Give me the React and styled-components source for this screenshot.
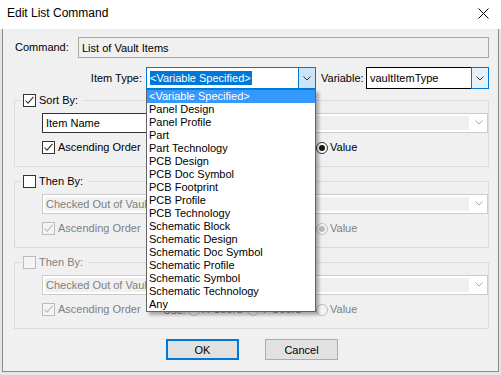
import styled, { createGlobalStyle } from "styled-components";

const ITEM_TYPES = [
  "<Variable Specified>",
  "Panel Design",
  "Panel Profile",
  "Part",
  "Part Technology",
  "PCB Design",
  "PCB Doc Symbol",
  "PCB Footprint",
  "PCB Profile",
  "PCB Technology",
  "Schematic Block",
  "Schematic Design",
  "Schematic Doc Symbol",
  "Schematic Profile",
  "Schematic Symbol",
  "Schematic Technology",
  "Any",
];

const GlobalStyle = createGlobalStyle`
  html, body {
    margin: 0;
    padding: 0;
    background: #e6e6e6;
  }
  body {
    font-family: "Liberation Sans", Arial, sans-serif;
    font-size: 11px;
    color: #000;
  }
  #root {
    width: 501px;
    height: 375px;
    overflow: hidden;
  }
`;

const Window = styled.div`
  width: 501px;
  height: 375px;
  display: flex;
  flex-direction: column;
`;

const TitleBar = styled.div`
  height: 29px;
  flex: none;
  box-sizing: border-box;
  background: #fff;
  display: flex;
  align-items: flex-start;
  justify-content: space-between;
  padding: 6px 12px 0 7px;
`;

const Title = styled.span`
  font-size: 12px;
  line-height: 14px;
`;

const Body = styled.div`
  margin: 0 2px;
  background: #f0f0f0;
  border: 1px solid #8a8a8a;
  border-top: none;
  padding: 8px 9px 11px 11px;
  display: flex;
  flex-direction: column;
`;

const Row = styled.div`
  display: flex;
  align-items: center;
  height: ${(p) => p.$h}px;
  margin-top: ${(p) => p.$mt || 0}px;
`;

const Label = styled.span`
  flex: none;
  width: ${(p) => p.$w}px;
  box-sizing: border-box;
  text-align: ${(p) => (p.$right ? "right" : "left")};
  padding: ${(p) => (p.$right ? "0 4px 0 0" : `0 0 0 ${p.$pl || 0}px`)};
  line-height: 13px;
`;

const ReadOnlyField = styled.div`
  flex: 1;
  height: 21px;
  box-sizing: border-box;
  border: 1px solid #a6a6a6;
  background: #f0f0f0;
  padding-left: 3px;
  display: flex;
  align-items: center;
`;

const Combo = styled.div`
  position: relative;
  flex: ${(p) => (p.$w ? "none" : "1")};
  width: ${(p) => (p.$w ? `${p.$w}px` : "auto")};
  height: 22px;
  box-sizing: border-box;
  display: flex;
  border: 1px solid ${(p) => (p.$focus ? "#0078d7" : "transparent")};
  background: #fff;
`;

const ComboText = styled.div`
  flex: 1;
  display: flex;
  align-items: center;
  padding-left: ${(p) => p.$pl}px;
  border: 1px solid ${(p) => (p.$outlined ? "#000" : "transparent")};
  border-right: none;
  ${(p) => (p.$outlined ? "margin: -1px 0 -1px -1px;" : "")}
`;

const Selection = styled.span`
  background: #0078d7;
  color: #fff;
  line-height: 14px;
  padding: 0 1px 0 0;
`;

const DropButton = styled.div`
  flex: none;
  width: 16px;
  display: flex;
  align-items: center;
  justify-content: center;
  background: ${(p) => (p.$pressed ? "#cce4f7" : "#e5f1fb")};
  border-left: 1px solid #0078d7;
  ${(p) =>
    p.$boxed
      ? "border: 1px solid #0078d7; margin: -1px -1px -1px 0;"
      : ""}
`;

const DropList = styled.ul`
  position: absolute;
  z-index: 10;
  top: calc(100% + 1px);
  left: -1px;
  width: 170px;
  margin: 0;
  padding: 0;
  list-style: none;
  box-sizing: border-box;
  background: #fff;
  border: 1px solid #646464;
  box-shadow: 3px 3px 3px rgba(0, 0, 0, 0.3);
`;

const DropItem = styled.li`
  height: 13px;
  line-height: 13px;
  padding-left: 2px;
  white-space: nowrap;
  overflow: hidden;
  background: ${(p) => (p.$active ? "#3399ff" : "transparent")};
  color: ${(p) => (p.$active ? "#fff" : "#000")};
`;

const Group = styled.fieldset`
  margin: ${(p) => p.$mt}px 0 0 0;
  padding: 6px 0 12px 27px;
  border: 1px solid #dcdcdc;
  min-width: 0;
`;

const Legend = styled.legend`
  display: flex;
  align-items: center;
  gap: 3px;
  height: 13px;
  line-height: 13px;
  margin-left: -21px;
  padding: 0 5px 0 2px;
  color: ${(p) => (p.$disabled ? "#808080" : "#000")};
`;

const FieldCombo = styled.div`
  display: flex;
  height: 20px;
  box-sizing: border-box;
  position: relative;
`;

const EditSegment = styled.div`
  flex: none;
  width: 110px;
  box-sizing: border-box;
  border: 1px solid #333;
  border-right: none;
  background: #fff;
  padding-left: 3px;
  display: flex;
  align-items: center;
`;

const DisabledSegment = styled.div`
  flex: 1;
  box-sizing: border-box;
  border: 1px solid #cccccc;
  ${(p) => (p.$joined ? "border-left: none; padding-left: 0;" : "padding-left: 2px;")}
  background: #fff;
  padding-top: 2px;
  padding-bottom: 2px;
  padding-right: 18px;
  display: flex;
`;

const DisabledFill = styled.div`
  flex: 1;
  background: #f0f0f0;
  color: #808080;
  padding-left: 1px;
  display: flex;
  align-items: center;
  white-space: nowrap;
  overflow: hidden;
`;

const FaintChevron = styled.div`
  position: absolute;
  right: 5px;
  top: 7px;
  display: flex;
`;

const OptionRow = styled.div`
  display: grid;
  grid-template-columns: 121px 25px 59px 69px auto;
  align-items: center;
  height: 13px;
  margin-top: 8px;
  color: ${(p) => (p.$disabled ? "#808080" : "#000")};
`;

const Choice = styled.span`
  display: flex;
  align-items: center;
  gap: ${(p) => p.$gap}px;
  line-height: 13px;
  white-space: nowrap;
`;

const Box = styled.span`
  flex: none;
  width: 13px;
  height: 13px;
  box-sizing: border-box;
  border: 1px solid ${(p) => (p.$disabled ? "#bcbcbc" : "#333")};
  background: ${(p) => (p.$disabled ? "#f4f4f4" : "#fff")};
  display: flex;
`;

const Dot = styled.span`
  flex: none;
  width: 12px;
  height: 12px;
  border-radius: 50%;
  box-sizing: border-box;
  border: 1px solid ${(p) => (p.$disabled ? "#bcbcbc" : "#333")};
  background: ${(p) => (p.$disabled ? "#f4f4f4" : "#fff")};
  display: flex;
  align-items: center;
  justify-content: center;
  &::after {
    content: "";
    display: ${(p) => (p.$checked ? "block" : "none")};
    width: 6px;
    height: 6px;
    border-radius: 50%;
    background: ${(p) => (p.$disabled ? "#bcbcbc" : "#1a1a1a")};
  }
`;

const ButtonRow = styled.div`
  display: flex;
  gap: 26px;
  margin-top: 10px;
  padding-left: 152px;
`;

const Button = styled.button`
  width: 73px;
  height: 21px;
  box-sizing: border-box;
  background: #e1e1e1;
  border: ${(p) => (p.$default ? "2px solid #0078d7" : "1px solid #adadad")};
  font: inherit;
  color: #000;
  padding: 0;
`;

function Chevron({ color = "#333" }) {
  return (
    <svg width="8" height="5" viewBox="0 0 8 5">
      <polyline points="0.5,0.5 4,4 7.5,0.5" fill="none" stroke={color} strokeWidth="1" />
    </svg>
  );
}

function CheckBox({ checked, disabled, label }) {
  return (
    <Choice $gap={3}>
      <Box $disabled={disabled}>
        {checked && (
          <svg width="11" height="11" viewBox="0 0 11 11">
            <polyline
              points="1.5,5.5 4,8.2 9.5,1.8"
              fill="none"
              stroke={disabled ? "#bcbcbc" : "#333"}
              strokeWidth="1.1"
            />
          </svg>
        )}
      </Box>
      {label}
    </Choice>
  );
}

function Radio({ checked, disabled, label }) {
  return (
    <Choice $gap={2}>
      <Dot $checked={checked} $disabled={disabled} />
      {label}
    </Choice>
  );
}

function SortGroup({ title, value, mt, enabled, legendDisabled, valueChecked, split }) {
  const off = !enabled;
  return (
    <Group $mt={mt}>
      <Legend $disabled={legendDisabled}>
        <Box $disabled={legendDisabled}>
          {enabled && (
            <svg width="11" height="11" viewBox="0 0 11 11">
              <polyline points="1.5,5.5 4,8.2 9.5,1.8" fill="none" stroke="#333" strokeWidth="1.1" />
            </svg>
          )}
        </Box>
        {title}
      </Legend>
      <FieldCombo>
        {split ? (
          <>
            <EditSegment>{value}</EditSegment>
            <DisabledSegment $joined>
              <DisabledFill />
            </DisabledSegment>
          </>
        ) : (
          <DisabledSegment>
            <DisabledFill>{value}</DisabledFill>
          </DisabledSegment>
        )}
        <FaintChevron>
          <Chevron color="#a8a8a8" />
        </FaintChevron>
      </FieldCombo>
      <OptionRow $disabled={off}>
        <CheckBox checked disabled={off} label="Ascending Order" />
        <span>Use:</span>
        <Radio disabled={off} label="X Coord" />
        <Radio disabled={off} label="Y Coord" />
        <Radio checked={valueChecked} disabled={off} label="Value" />
      </OptionRow>
    </Group>
  );
}

export default function App() {
  return (
    <>
      <GlobalStyle />
      <Window>
        <TitleBar>
          <Title>Edit List Command</Title>
          <svg width="11" height="11" viewBox="0 0 11 11" style={{ marginTop: 2 }}>
            <path d="M0.5,0.5 L10.5,10.5 M10.5,0.5 L0.5,10.5" stroke="#000" strokeWidth="1" />
          </svg>
        </TitleBar>
        <Body>
          <Row $h={21}>
            <Label $w={64} $pl={1}>
              Command:
            </Label>
            <ReadOnlyField>List of Vault Items</ReadOnlyField>
          </Row>
          <Row $h={22} $mt={9}>
            <Label $w={132} $right>
              Item Type:
            </Label>
            <Combo $w={170} $focus>
              <ComboText $pl={2}>
                <Selection>{"<Variable Specified>"}</Selection>
              </ComboText>
              <DropButton $pressed>
                <Chevron />
              </DropButton>
              <DropList>
                {ITEM_TYPES.map((t, i) => (
                  <DropItem key={t} $active={i === 0}>
                    {t}
                  </DropItem>
                ))}
              </DropList>
            </Combo>
            <Label $w={50} $pl={5}>
              Variable:
            </Label>
            <Combo>
              <ComboText $pl={3} $outlined>
                vaultItemType
              </ComboText>
              <DropButton $boxed>
                <Chevron />
              </DropButton>
            </Combo>
          </Row>
          <SortGroup
            title="Sort By:"
            value="Item Name"
            mt={5}
            enabled
            split
            valueChecked
          />
          <SortGroup
            title="Then By:"
            value="Checked Out of Vault Status"
            mt={8}
            valueChecked
          />
          <SortGroup
            title="Then By:"
            value="Checked Out of Vault Status"
            mt={8}
            legendDisabled
          />
          <ButtonRow>
            <Button $default>OK</Button>
            <Button>Cancel</Button>
          </ButtonRow>
        </Body>
      </Window>
    </>
  );
}
